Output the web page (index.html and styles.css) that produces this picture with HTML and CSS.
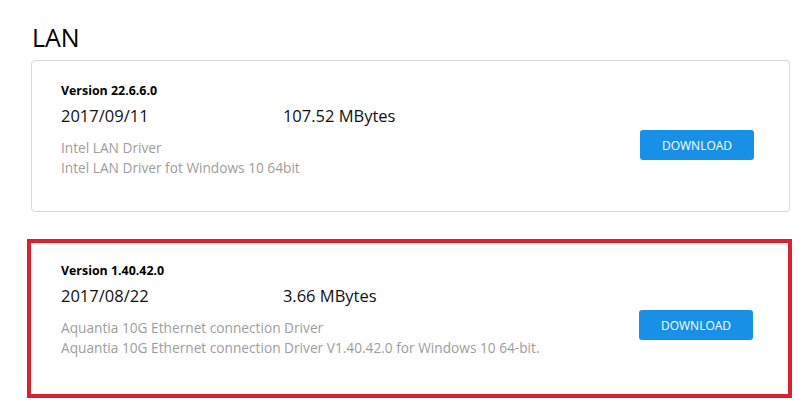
FILE: index.html
```html
<!DOCTYPE html>
<html lang="en">
<head>
    <meta charset="UTF-8">
    <meta name="viewport" content="width=device-width, initial-scale=1.0">
    <title>LAN Drivers</title>
    <link rel="stylesheet" href="styles.css">
</head>
<body>

<div class="section">
    <h2>LAN</h2>

    <div class="card">
        <div class="info">
            <div class="version">Version 22.6.6.0</div>
            <div class="meta">
                <span class="date">2017/09/11</span>
                <span class="size">107.52 MBytes</span>
            </div>
            <div class="desc">Intel LAN Driver</div>
            <div class="desc">Intel LAN Driver fot Windows 10 64bit</div>
        </div>
        <button class="download">DOWNLOAD</button>
    </div>

    <!-- marcado en rojo -->
    <div class="card highlight">
        <div class="info">
            <div class="version">Version 1.40.42.0</div>
            <div class="meta">
                <span class="date">2017/08/22</span>
                <span class="size">3.66 MBytes</span>
            </div>
            <div class="desc">Aquantia 10G Ethernet connection Driver</div>
            <div class="desc">Aquantia 10G Ethernet connection Driver V1.40.42.0 for Windows 10 64-bit.</div>
        </div>
        <button class="download">DOWNLOAD</button>
    </div>
</div>

</body>
</html>
```

FILE: styles.css
```css
body {
    font-family: "Open Sans", Arial, sans-serif;
    margin: 0;
    background-color: #fff;
    color: #000;
}
.section {
    padding: 21px 19px 0 31px;
}
h2 {
    font-size: 25px;
    font-weight: normal;
    margin: 0 0 7px 1px;
    line-height: 32px;
}
.card {
    display: flex;
    justify-content: space-between;
    border: 1px solid #d9d9d9;
    border-radius: 4px;
    padding: 22px 35px 33px 29px;
    margin-bottom: 27px;
}
.card.highlight {
    border: 4px solid #d8232f;
    border-radius: 0;
    margin-left: -4px;
    margin-right: -2px;
    padding: 20px 35px 36px 30px;
}
.version {
    font-size: 12.4px;
    font-weight: bold;
    line-height: 16px;
}
.meta {
    font-size: 16.5px;
    line-height: 34px;
    margin-bottom: 5px;
    color: #111;
}
.size {
    margin-left: 130px;
}
.desc {
    font-size: 13.7px;
    color: #9d9d9d;
    line-height: 20px;
}
.download {
    align-self: flex-start;
    margin-top: 47px;
    width: 114px;
    height: 30px;
    background-color: #1890e6;
    color: white;
    border: none;
    border-radius: 3px;
    font-family: inherit;
    font-size: 12px;
    cursor: pointer;
}
.download:hover {
    background-color: #1280d0;
}
```
